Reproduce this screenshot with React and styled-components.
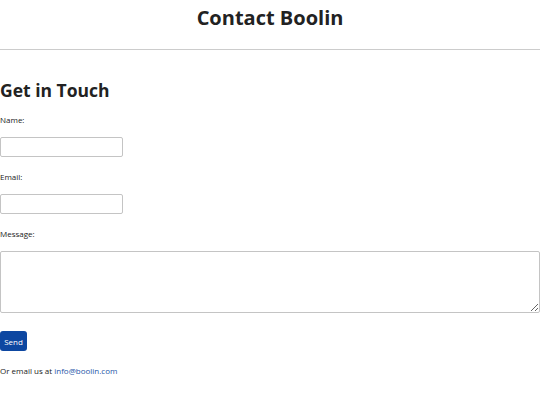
import React from 'react';
import { styled, createGlobalStyle } from 'styled-components';

const GlobalStyle = createGlobalStyle`
  body {
    margin: 0;
    background: #fff;
    color: #222;
    font-family: "Open Sans", "Noto Sans", sans-serif;
  }
`;

const App = () => {
  return (
    <>
      <GlobalStyle />
      <SHeader>
        <STitle>Contact Boolin</STitle>
      </SHeader>
      <SMain>
        <SHeading>Get in Touch</SHeading>
        <SForm onSubmit={(e) => e.preventDefault()}>
          <SField>
            <SLabel htmlFor="name">Name:</SLabel>
            <SInput id="name" type="text" />
          </SField>
          <SField>
            <SLabel htmlFor="email">Email:</SLabel>
            <SInput id="email" type="email" />
          </SField>
          <SField>
            <SLabel htmlFor="message">Message:</SLabel>
            <STextarea id="message" />
          </SField>
          <SButton type="submit">Send</SButton>
        </SForm>
        <SNote>
          Or email us at <a href="mailto:info@boolin.com">info@boolin.com</a>
        </SNote>
      </SMain>
    </>
  );
};

const SHeader = styled.header`
  display: flex;
  justify-content: center;
  padding: 4px 0 18px;
  border-bottom: 1px solid #ccc;
`;

const STitle = styled.h1`
  margin: 0;
  font-size: 20px;
  line-height: 27px;
  font-weight: 700;
  color: #222;
`;

const SMain = styled.main`
  display: flex;
  flex-direction: column;
  padding-top: 28px;
`;

const SHeading = styled.h2`
  margin: 0 0 12px;
  font-size: 17.5px;
  line-height: 24px;
  font-weight: 700;
  color: #222;
`;

const SForm = styled.form`
  display: flex;
  flex-direction: column;
  align-items: flex-start;
  gap: 14px;
`;

const SField = styled.div`
  display: flex;
  flex-direction: column;
  align-items: flex-start;
  gap: 11px;
  width: 100%;
`;

const SLabel = styled.label`
  font-size: 8px;
  line-height: 12px;
  color: #222;
`;

const SInput = styled.input`
  box-sizing: border-box;
  width: 123px;
  height: 20px;
  border: 1px solid #c4c4c4;
  border-radius: 2px;
  margin: 0;
`;

const STextarea = styled.textarea`
  box-sizing: border-box;
  width: 100%;
  height: 62px;
  border: 1px solid #c4c4c4;
  border-radius: 2px;
  margin: 0;
`;

const SButton = styled.button`
  margin-top: 4px;
  width: 27px;
  height: 20px;
  padding: 0;
  border: none;
  border-radius: 3px;
  background: #0d47a1;
  color: #fff;
  font-family: inherit;
  font-size: 8px;
`;

const SNote = styled.p`
  margin: 14px 0 0;
  font-size: 8px;
  line-height: 11px;
  color: #222;

  a {
    color: #1e55a8;
    text-decoration: none;
  }
`;

export default App;
